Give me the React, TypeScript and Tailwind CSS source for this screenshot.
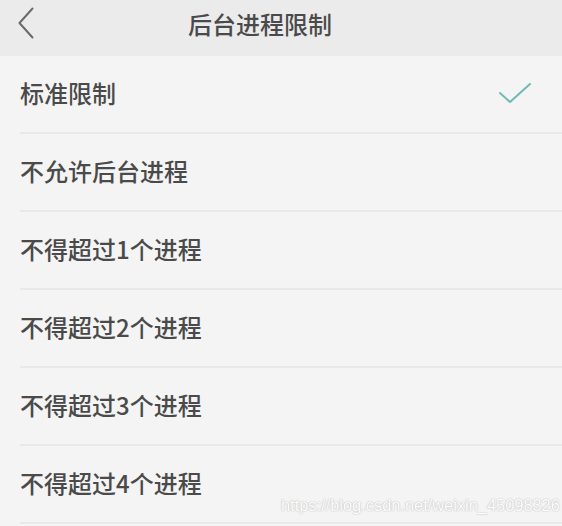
import React from "react";

const options = [
  "标准限制",
  "不允许后台进程",
  "不得超过1个进程",
  "不得超过2个进程",
  "不得超过3个进程",
  "不得超过4个进程",
];

const cjk = { fontFamily: '"Noto Sans CJK SC", "Noto Sans", sans-serif' };

export default function App() {
  const selected = 0;
  return (
    <div className="relative w-[562px] h-[526px] overflow-hidden bg-[#f4f4f4]" style={cjk}>
      <header className="relative h-[56px] bg-[#ebebeb] flex items-center justify-center">
        <button className="absolute left-[14px] top-[4px] w-[24px] h-[38px] flex items-center justify-center">
          <svg width="18" height="34" viewBox="0 0 18 34" fill="none">
            <path d="M15.5 2.5 L2.5 17 L15.5 31.5" stroke="#6a6a6a" strokeWidth="2" strokeLinecap="round" strokeLinejoin="round" />
          </svg>
        </button>
        <h1 className="text-[24px] leading-none font-medium text-[#4a4a4a] -mt-[8px] mr-[42px]">后台进程限制</h1>
      </header>
      <ul>
        {options.map((label, i) => (
          <li key={label} className="pl-[20px]">
            <div className="h-[78px] border-b-2 border-[#e8e8e8] flex items-center justify-between pr-[30px]">
              <span className="text-[24px] leading-none font-medium text-[#4a4a4a] -mt-[2px]">{label}</span>
              {i === selected && (
                <svg width="34" height="22" viewBox="0 0 34 22" fill="none" className="-mt-[2px]">
                  <path d="M2 11 L12 20 L32 2" stroke="#6fbab5" strokeWidth="2" strokeLinecap="round" strokeLinejoin="round" />
                </svg>
              )}
            </div>
          </li>
        ))}
      </ul>
      <div
        className="absolute left-[281px] top-[497px] text-[16.4px] leading-none text-[#fdfdfd]"
        style={{ fontFamily: '"Liberation Sans", Arial, sans-serif', textShadow: "0 0 1px #b8b8b8, 0 0 2px #cccccc" }}
      >
        https://blog.csdn.net/weixin_45098326
      </div>
    </div>
  );
}
